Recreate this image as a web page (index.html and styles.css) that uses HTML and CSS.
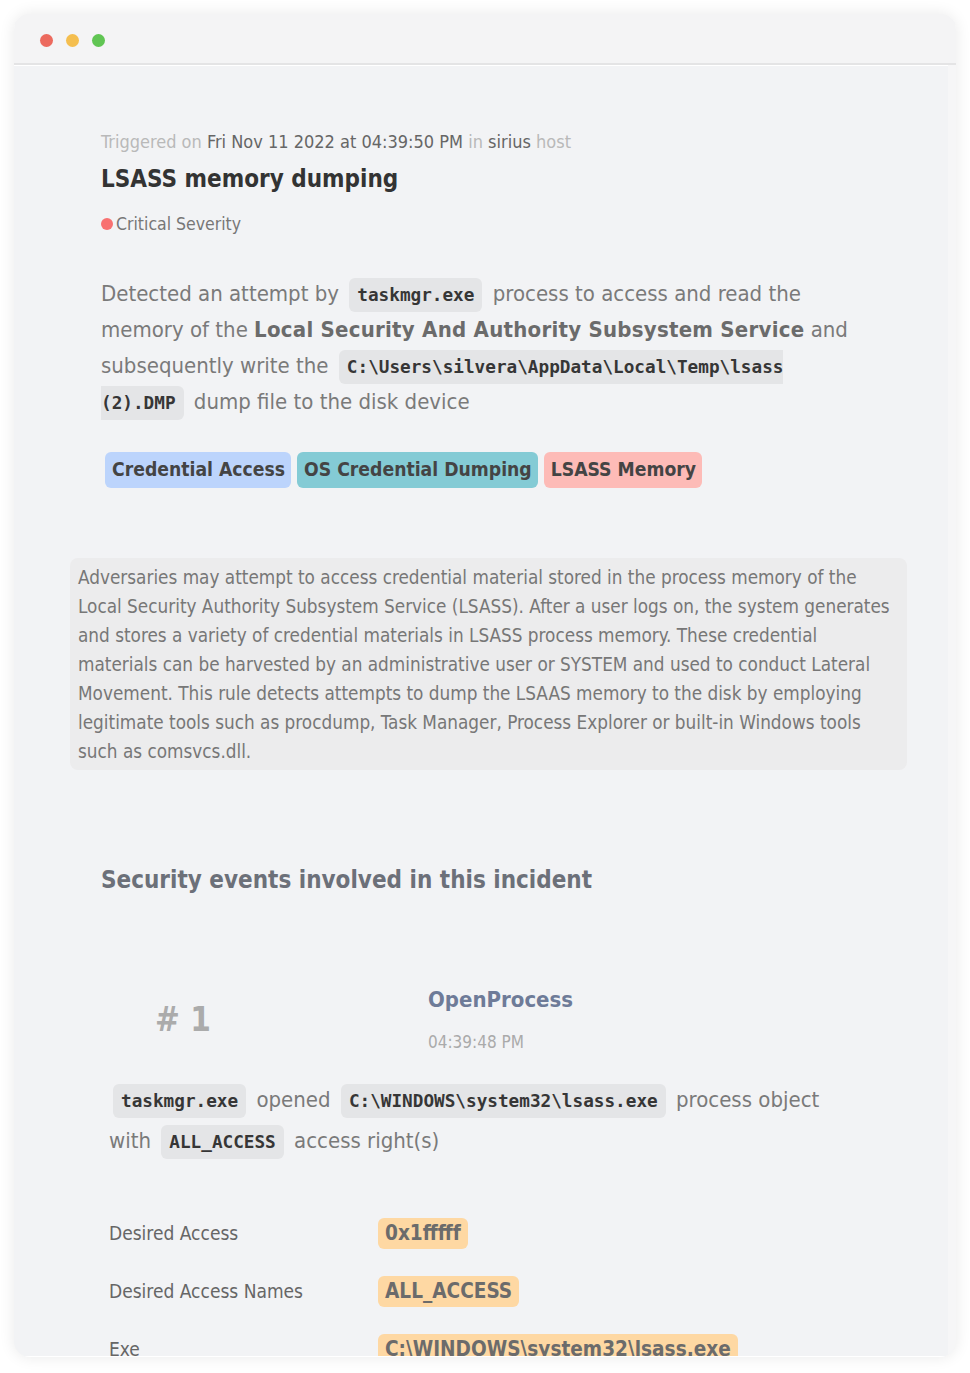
FILE: index.html
```html
<!DOCTYPE html>
<html lang="en">
<head>
<meta charset="utf-8">
<title>LSASS memory dumping</title>
<link rel="stylesheet" href="styles.css">
</head>
<body>
<div class="window">
  <div class="titlebar">
    <span class="dot dot-red"></span>
    <span class="dot dot-yellow"></span>
    <span class="dot dot-green"></span>
  </div>
  <div class="content">
    <div class="incident">
      <div class="meta"><span class="muted">Triggered on</span> Fri Nov 11 2022 at 04:39:50 PM <span class="muted">in</span> sirius <span class="muted">host</span></div>
      <h1 class="title">LSASS memory dumping</h1>
      <div class="severity"><span class="sev-dot"></span>Critical Severity</div>
      <p class="summary">Detected an attempt by <code class="chip">taskmgr.exe</code> process to access and read the memory of the <strong>Local Security And Authority Subsystem Service</strong> and subsequently write the <code class="chip">C:\Users\silvera\AppData\Local\Temp\lsass (2).DMP</code> dump file to the disk device</p>
      <div class="tags">
        <span class="tag tag-blue">Credential Access</span>
        <span class="tag tag-teal">OS Credential Dumping</span>
        <span class="tag tag-pink">LSASS Memory</span>
      </div>
    </div>
    <div class="description">Adversaries may attempt to access credential material stored in the process memory of the Local Security Authority Subsystem Service (LSASS). After a user logs on, the system generates and stores a variety of credential materials in LSASS process memory. These credential materials can be harvested by an administrative user or SYSTEM and used to conduct Lateral Movement. This rule detects attempts to dump the LSAAS memory to the disk by employing legitimate tools such as procdump, Task Manager, Process Explorer or built-in Windows tools such as comsvcs.dll.</div>
    <h2 class="section-title">Security events involved in this incident</h2>
    <div class="event">
      <div class="event-head">
        <div class="event-num"># 1</div>
        <div class="event-info">
          <div class="event-name">OpenProcess</div>
          <div class="event-time">04:39:48 PM</div>
        </div>
      </div>
      <p class="event-text"><code class="chip">taskmgr.exe</code> opened <code class="chip">C:\WINDOWS\system32\lsass.exe</code> process object with <code class="chip">ALL_ACCESS</code> access right(s)</p>
      <div class="props">
        <div class="prop-row"><span class="prop-label">Desired Access</span><span class="prop-value"><span class="val-chip">0x1fffff</span></span></div>
        <div class="prop-row"><span class="prop-label">Desired Access Names</span><span class="prop-value"><span class="val-chip">ALL_ACCESS</span></span></div>
        <div class="prop-row"><span class="prop-label">Exe</span><span class="prop-value"><span class="val-chip">C:\WINDOWS\system32\lsass.exe</span></span></div>
      </div>
    </div>
  </div>
</div>
</body>
</html>
```

FILE: styles.css
```css
* { box-sizing: border-box; }

html, body {
  margin: 0;
  padding: 0;
  background: #ffffff;
}

body {
  font-family: "DejaVu Sans", Verdana, sans-serif;
  font-stretch: condensed;
  color: #777;
}

.window {
  margin: 14px;
  width: 942px;
  height: 1343px;
  border-radius: 16px;
  overflow: hidden;
  background: #f2f3f5;
  box-shadow: 0 0 16px rgba(0, 0, 0, 0.09);
  display: flex;
  flex-direction: column;
}

.titlebar {
  height: 51px;
  flex: none;
  background: #f4f4f5;
  border-bottom: 2px solid #e4e4e5;
  box-shadow: 0 1px 0 #ffffff;
  display: flex;
  align-items: center;
  gap: 13px;
  padding: 3px 0 0 26px;
}

.dot {
  width: 13px;
  height: 13px;
  border-radius: 50%;
  display: block;
}
.dot-red { background: #ec6a5e; }
.dot-yellow { background: #f4be4f; }
.dot-green { background: #60c553; }

.content {
  flex: 1;
  overflow: hidden;
  padding: 0 41px 0 56px;
  border-right: 8px solid #f6f6f7;
  border-bottom: 1px solid #ffffff;
}

.incident {
  padding: 65px 31px 0 31px;
}

.meta {
  font-size: 18px;
  line-height: 24px;
  color: #666;
}
.muted { color: #b9b9b9; }

.title {
  margin: 9px 0 0;
  font-size: 24px;
  line-height: 32px;
  font-weight: 700;
  color: #333;
}

.severity {
  margin-top: 17px;
  font-size: 17.5px;
  line-height: 24px;
  color: #777;
  display: flex;
  align-items: center;
}
.sev-dot {
  width: 12px;
  height: 12px;
  border-radius: 50%;
  background: #f87171;
  margin-right: 3px;
  flex: none;
}

.summary {
  margin: 40px 0 0;
  font-size: 22px;
  line-height: 36px;
  color: #7a7a7a;
}
.summary strong {
  color: #6b6b6b;
  font-weight: 700;
  letter-spacing: 0.25px;
}

.chip {
  font-family: "DejaVu Sans Mono", "Liberation Mono", monospace;
  font-stretch: normal;
  font-weight: 700;
  font-size: 17.7px;
  line-height: 1;
  color: #363636;
  background: #e4e5e7;
  border-radius: 6px;
  padding: 7px 8px;
  margin: 0 4px;
}

.tags {
  margin-top: 32px;
  display: flex;
  gap: 6px;
  padding-left: 4px;
}
.tag {
  display: block;
  height: 36px;
  line-height: 36px;
  padding: 0 6px 0 7px;
  border-radius: 6px;
  font-size: 19.2px;
  font-weight: 700;
  color: #444;
}
.tag-blue { background: #bcd4fc; }
.tag-teal { background: #84cbd5; }
.tag-pink { background: #fdbbb7; }

.description {
  margin-top: 70px;
  background: #ececed;
  border-radius: 8px;
  padding: 5px 8px 4px 8px;
  font-size: 18.8px;
  line-height: 29px;
  color: #777;
}

.section-title {
  margin: 94px 0 0 31px;
  font-size: 24px;
  line-height: 32px;
  font-weight: 700;
  color: #6c7079;
}

.event {
  padding-left: 39px;
  padding-right: 40px;
}

.event-head {
  margin-top: 89px;
  display: flex;
  align-items: center;
}
.event-num {
  width: 319px;
  flex: none;
  padding-left: 46px;
  font-size: 33px;
  font-weight: 700;
  color: #ababab;
}
.event-name {
  font-size: 22px;
  line-height: 30px;
  font-weight: 700;
  color: #6e7b98;
}
.event-time {
  margin-top: 15px;
  font-size: 17px;
  line-height: 24px;
  color: #aaa;
}

.event-text {
  margin: 25px 0 0;
  font-size: 22px;
  line-height: 41px;
  color: #7a7a7a;
}

.props {
  margin-top: 43px;
}
.prop-row {
  display: grid;
  grid-template-columns: 269px 1fr;
  align-items: center;
  height: 58px;
}
.prop-label {
  font-size: 19px;
  color: #666;
}
.val-chip {
  display: inline-block;
  background: #fed8a3;
  border-radius: 6px;
  padding: 0 7px;
  height: 31px;
  line-height: 31px;
  font-size: 20.6px;
  font-weight: 700;
  color: #6b6b6b;
}
```
